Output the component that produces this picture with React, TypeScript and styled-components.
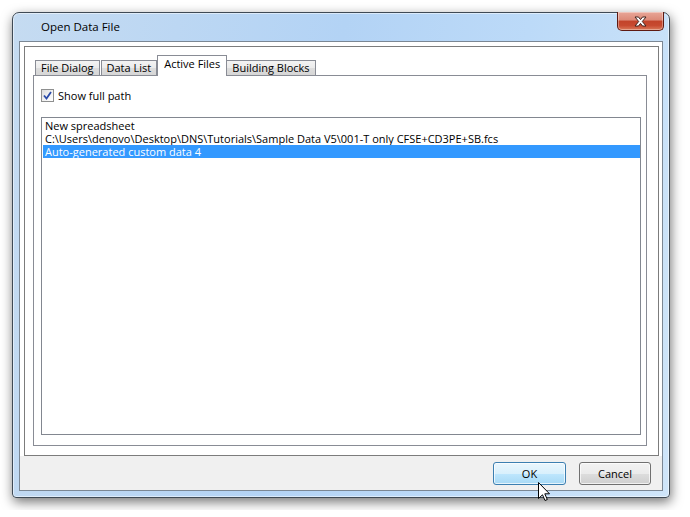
import React from "react";
import styled, { createGlobalStyle } from "styled-components";

const GlobalStyle = createGlobalStyle`
  html, body { margin: 0; padding: 0; background: #ffffff; }
  body { font-family: "Open Sans", "Noto Sans", sans-serif; }
`;

const Page = styled.div`
  padding: 12px;
`;

const Window = styled.div`
  width: 658px;
  box-sizing: border-box;
  border: 1px solid #3f4a55;
  border-radius: 7px 7px 4px 4px;
  background: linear-gradient(100deg, #c5dbf1 0%, #b3d3f5 45%, #bcdaf8 70%, #cfe5f9 100%);
  box-shadow: 0 0 0 1px rgba(255, 255, 255, 0.5) inset, 1px 4px 12px rgba(0, 0, 0, 0.55);
  padding: 0 6px 6px 6px;
  display: flex;
  flex-direction: column;
`;

const TitleBar = styled.div`
  height: 28px;
  display: flex;
  align-items: flex-start;
`;

const Title = styled.div`
  flex: 1;
  padding-left: 22px;
  padding-top: 6px;
  font-size: 11.5px;
  line-height: 16px;
  color: #000;
`;

const CloseButton = styled.div`
  width: 47px;
  height: 19px;
  box-sizing: border-box;
  margin-right: -1px;
  margin-top: -1px;
  border: 1px solid #5e1a12;
  border-top: none;
  border-radius: 0 0 5px 5px;
  background: linear-gradient(to bottom, #e8a698 0%, #dc8a78 45%, #c2432a 50%, #c74a30 75%, #da7a5a 100%);
  box-shadow: inset 0 0 0 1px rgba(255, 255, 255, 0.35);
  display: flex;
  align-items: center;
  justify-content: center;
`;

const Client = styled.div`
  border: 1px solid #7b8794;
  background: #ffffff;
  display: flex;
  flex-direction: column;
`;

const TopArea = styled.div`
  padding: 4px 3px 0 4px;
  background: #ffffff;
`;

const OuterBox = styled.div`
  height: 410px;
  box-sizing: border-box;
  border: 1px solid #7c7c7c;
  padding: 8px 11px 9px 8px;
  display: flex;
  flex-direction: column;
`;

const TabStrip = styled.div`
  height: 20px;
  display: flex;
  align-items: flex-end;
  padding-left: 2px;
  position: relative;
  z-index: 1;
`;

const Tab = styled.div<{ $active?: boolean }>`
  box-sizing: border-box;
  border: 1px solid #898c95;
  border-bottom: none;
  font-size: 11px;
  line-height: 13px;
  color: #000;
  white-space: nowrap;
  padding: ${(p) => (p.$active ? "1px 6px 6px 6px" : "0 5px 1px 5px")};
  margin: ${(p) => (p.$active ? "0 -1px -1px -1px" : "0 1px 0 0")};
  background: ${(p) =>
    p.$active
      ? "#ffffff"
      : "linear-gradient(to bottom, #f3f3f3 0%, #ebebeb 50%, #dddddd 51%, #d6d6d6 100%)"};
  position: relative;
  z-index: ${(p) => (p.$active ? 2 : 1)};
`;

const TabPane = styled.div`
  flex: 1;
  border: 1px solid #898c95;
  background: #ffffff;
  padding: 13px 5px 10px 7px;
  display: flex;
  flex-direction: column;
  gap: 15px;
  min-height: 0;
`;

const CheckRow = styled.label`
  display: flex;
  align-items: center;
  gap: 4px;
  height: 13px;
  font-size: 11px;
  line-height: 13px;
  color: #000;
`;

const CheckBox = styled.span`
  width: 13px;
  height: 13px;
  box-sizing: border-box;
  border: 1px solid #8e8f8f;
  background: linear-gradient(135deg, #dcdcdc 0%, #f4f4f4 60%, #ffffff 100%);
  display: flex;
  align-items: center;
  justify-content: center;
`;

const ListBox = styled.div`
  flex: 1;
  border: 1px solid #828790;
  background: #ffffff;
  padding: 1px 0 1px 1px;
  display: flex;
  flex-direction: column;
`;

const ListItem = styled.div<{ $selected?: boolean }>`
  height: 13px;
  font-size: 11px;
  line-height: 13px;
  padding-left: 2px;
  white-space: nowrap;
  color: ${(p) => (p.$selected ? "#ffffff" : "#000000")};
  background: ${(p) => (p.$selected ? "#3399ff" : "transparent")};
`;

const ButtonBar = styled.div`
  height: 34px;
  box-sizing: border-box;
  background: #f0f0f0;
  display: flex;
  justify-content: flex-end;
  align-items: flex-start;
  gap: 13px;
  padding: 6px 11px 0 0;
`;

const Button = styled.div<{ $hot?: boolean; $width: number }>`
  position: relative;
  width: ${(p) => p.$width}px;
  height: 23px;
  box-sizing: border-box;
  border-radius: 3px;
  border: 1px solid ${(p) => (p.$hot ? "#3c7fb1" : "#707070")};
  background: ${(p) =>
    p.$hot
      ? "linear-gradient(to bottom, #eaf6fd 0%, #d9f0fc 50%, #bee6fd 51%, #a7d9f5 100%)"
      : "linear-gradient(to bottom, #f2f2f2 0%, #ebebeb 50%, #dddddd 51%, #cfcfcf 100%)"};
  box-shadow: inset 0 0 0 1px rgba(255, 255, 255, 0.7);
  display: flex;
  align-items: center;
  justify-content: center;
  font-size: 11px;
  line-height: 13px;
  color: #000;
`;

const Cursor = styled.svg`
  position: absolute;
  left: 44px;
  top: 19px;
  overflow: visible;
`;

const tabs = ["File Dialog", "Data List", "Active Files", "Building Blocks"];
const items = [
  "New spreadsheet",
  "C:\\Users\\denovo\\Desktop\\DNS\\Tutorials\\Sample Data V5\\001-T only CFSE+CD3PE+SB.fcs",
  "Auto-generated custom data 4",
];

export default function App() {
  return (
    <>
      <GlobalStyle />
      <Page>
        <Window>
          <TitleBar>
            <Title>Open Data File</Title>
            <CloseButton>
              <svg width="13" height="11" viewBox="0 0 13 11">
                <path
                  d="M1 1 H4.5 L6.5 3.6 L8.5 1 H12 L8.3 5.5 L12 10 H8.5 L6.5 7.4 L4.5 10 H1 L4.7 5.5 Z"
                  fill="#ffffff"
                  stroke="#40221c"
                  strokeWidth="1"
                  strokeLinejoin="round"
                />
              </svg>
            </CloseButton>
          </TitleBar>
          <Client>
            <TopArea>
              <OuterBox>
                <TabStrip>
                  {tabs.map((t) => (
                    <Tab key={t} $active={t === "Active Files"}>
                      {t}
                    </Tab>
                  ))}
                </TabStrip>
                <TabPane>
                  <CheckRow>
                    <CheckBox>
                      <svg width="9" height="9" viewBox="0 0 9 9">
                        <path d="M1 4.5 L3.5 7.5 L8 1" fill="none" stroke="#2a4aa8" strokeWidth="1.8" />
                      </svg>
                    </CheckBox>
                    Show full path
                  </CheckRow>
                  <ListBox>
                    {items.map((it, i) => (
                      <ListItem key={i} $selected={i === 2}>
                        {it}
                      </ListItem>
                    ))}
                  </ListBox>
                </TabPane>
              </OuterBox>
            </TopArea>
            <ButtonBar>
              <Button $hot $width={73}>
                OK
                <Cursor width="12" height="19" viewBox="0 0 12 19">
                  <path
                    d="M0.5 0.5 L0.5 16.5 L4.5 12.8 L7 18.5 L9.3 17.5 L6.8 11.8 L11.5 11.8 Z"
                    fill="#ffffff"
                    stroke="#000000"
                    strokeWidth="1"
                    strokeLinejoin="miter"
                  />
                </Cursor>
              </Button>
              <Button $width={72}>Cancel</Button>
            </ButtonBar>
          </Client>
        </Window>
      </Page>
    </>
  );
}
